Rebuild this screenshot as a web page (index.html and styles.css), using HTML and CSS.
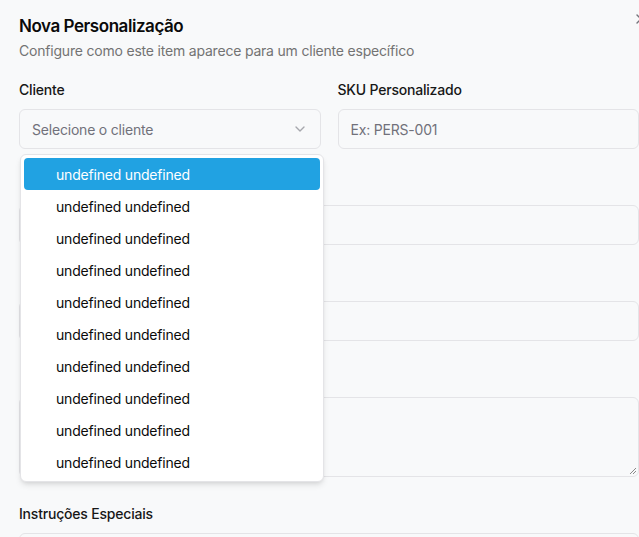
FILE: index.html
```html
<!DOCTYPE html>
<html lang="pt">
<head>
<meta charset="utf-8">
<link rel="stylesheet" href="styles.css">
</head>
<body>
<div class="dialog">
  <button class="close" aria-label="Fechar">
    <svg width="16" height="16" viewBox="0 0 24 24" fill="none" stroke="currentColor" stroke-width="2" stroke-linecap="round" stroke-linejoin="round"><path d="M18 6 6 18"/><path d="m6 6 12 12"/></svg>
  </button>
  <header class="head">
    <h2 class="title">Nova Personalização</h2>
    <p class="desc">Configure como este item aparece para um cliente específico</p>
  </header>
  <form class="form">
    <div class="row">
      <div class="field">
        <label class="label">Cliente</label>
        <div class="select-wrap">
          <div class="select">
            <span class="placeholder">Selecione o cliente</span>
            <svg class="chev" width="16" height="16" viewBox="0 0 24 24" fill="none" stroke="currentColor" stroke-width="2" stroke-linecap="round" stroke-linejoin="round"><path d="m6 9 6 6 6-6"/></svg>
          </div>
          <div class="menu">
            <div class="item active">undefined undefined</div>
            <div class="item">undefined undefined</div>
            <div class="item">undefined undefined</div>
            <div class="item">undefined undefined</div>
            <div class="item">undefined undefined</div>
            <div class="item">undefined undefined</div>
            <div class="item">undefined undefined</div>
            <div class="item">undefined undefined</div>
            <div class="item">undefined undefined</div>
            <div class="item">undefined undefined</div>
          </div>
        </div>
      </div>
      <div class="field">
        <label class="label">SKU Personalizado</label>
        <div class="input"><span class="placeholder">Ex: PERS-001</span></div>
      </div>
    </div>
    <div class="field">
      <label class="label"></label>
      <div class="input"></div>
    </div>
    <div class="field">
      <label class="label"></label>
      <div class="input"></div>
    </div>
    <div class="field">
      <label class="label"></label>
      <div class="textarea">
        <svg class="grip" width="8" height="8" viewBox="0 0 8 8"><path d="M7 1 1 7M7 4 4 7" stroke="#8a8a8a" stroke-width="1"/></svg>
      </div>
    </div>
    <div class="field">
      <label class="label">Instruções Especiais</label>
      <div class="input"></div>
    </div>
  </form>
</div>
</body>
</html>
```

FILE: styles.css
```css
html, body {
  margin: 0;
  padding: 0;
  background: #f8f9fa;
  overflow: hidden;
  font-family: Inter, "Liberation Sans", sans-serif;
  color: #0a0a0a;
}

.dialog {
  position: relative;
  width: 639px;
  height: 537px;
  overflow: hidden;
  padding: 17px 0 0 19px;
  box-sizing: border-box;
}

.form, .head {
  width: 620px;
}

.close {
  position: absolute;
  left: 633px;
  top: 11px;
  padding: 0;
  margin: 0;
  border: 0;
  background: none;
  color: #52525b;
  opacity: 0.8;
  display: flex;
}

.head {
  display: flex;
  flex-direction: column;
  gap: 6px;
}

.title {
  margin: 0;
  font-size: 17px;
  line-height: 18px;
  font-weight: 600;
  letter-spacing: -0.45px;
}

.desc {
  margin: 0;
  font-size: 14px;
  line-height: 20px;
  color: #737373;
  letter-spacing: -0.2px;
}

.form {
  margin-top: 19px;
  display: flex;
  flex-direction: column;
  gap: 27px;
}

.row {
  display: grid;
  grid-template-columns: 1fr 1fr;
  gap: 17px;
}

.field {
  display: flex;
  flex-direction: column;
  gap: 9px;
}

.label {
  display: block;
  height: 20px;
  font-size: 14px;
  line-height: 20px;
  font-weight: 500;
  color: #171717;
  letter-spacing: -0.2px;
}

.select-wrap {
  position: relative;
}

.select, .input {
  box-sizing: border-box;
  height: 40px;
  border: 1px solid #e4e4e7;
  border-radius: 6px;
  background: #f8f9fa;
  display: flex;
  align-items: center;
  padding: 0 12px;
  font-size: 14px;
  letter-spacing: -0.2px;
}

.select {
  justify-content: space-between;
}

.placeholder {
  color: #71717a;
}

.chev {
  color: #71717a;
  opacity: 0.6;
}

.textarea {
  box-sizing: border-box;
  height: 80px;
  border: 1px solid #e4e4e7;
  border-radius: 6px;
  background: #f8f9fa;
  position: relative;
}

.grip {
  position: absolute;
  right: 1px;
  bottom: 1px;
}

.menu {
  position: absolute;
  z-index: 10;
  top: 45px;
  left: 1px;
  width: 304px;
  box-sizing: border-box;
  padding: 3px;
  background: #ffffff;
  border: 1px solid #e4e4e7;
  border-radius: 6px;
  box-shadow: 0 4px 6px -1px rgba(0,0,0,0.1), 0 2px 4px -2px rgba(0,0,0,0.1);
}

.item {
  height: 32px;
  display: flex;
  align-items: center;
  padding-left: 32px;
  border-radius: 4px;
  font-size: 14px;
  color: #0a0a0a;
  letter-spacing: -0.2px;
}

.item.active {
  background: #21a2e2;
  color: #ffffff;
}
```
